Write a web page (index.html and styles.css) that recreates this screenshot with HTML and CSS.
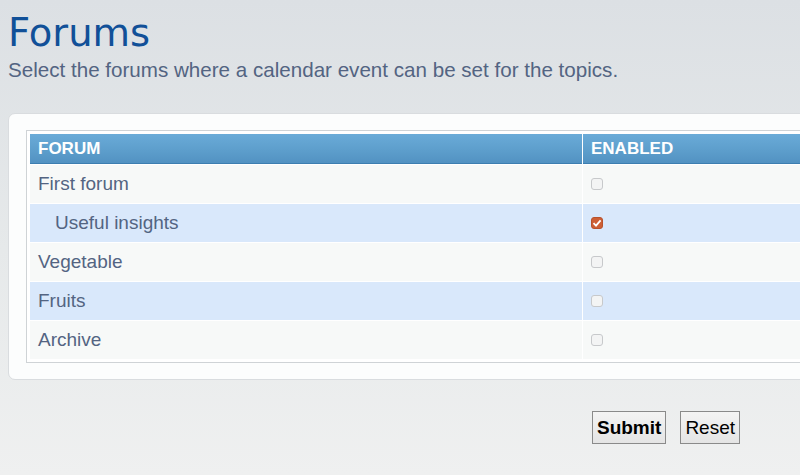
FILE: index.html
```html
<!DOCTYPE html>
<html lang="en">
<head>
<meta charset="utf-8">
<title>Forums</title>
<link rel="stylesheet" href="styles.css">
</head>
<body>
<div class="page">
  <h1 class="title">Forums</h1>
  <p class="intro">Select the forums where a calendar event can be set for the topics.</p>
  <form class="form">
    <div class="panel">
      <table class="grid">
        <thead>
          <tr>
            <th class="col-forum">Forum</th>
            <th>Enabled</th>
          </tr>
        </thead>
        <tbody>
          <tr class="row1">
            <td>First forum</td>
            <td><input type="checkbox" class="check"></td>
          </tr>
          <tr class="row2">
            <td><span class="indent">Useful insights</span></td>
            <td><input type="checkbox" class="check" checked></td>
          </tr>
          <tr class="row1">
            <td>Vegetable</td>
            <td><input type="checkbox" class="check"></td>
          </tr>
          <tr class="row2">
            <td>Fruits</td>
            <td><input type="checkbox" class="check"></td>
          </tr>
          <tr class="row1">
            <td>Archive</td>
            <td><input type="checkbox" class="check"></td>
          </tr>
        </tbody>
      </table>
    </div>
    <div class="actions">
      <button type="submit" class="btn btn-primary">Submit</button>
      <button type="reset" class="btn">Reset</button>
    </div>
  </form>
</div>
</body>
</html>
```
FILE: styles.css
```css
html {
  overflow: hidden;
  height: 100%;
}
body {
  margin: 0;
  min-height: 100%;
  background: linear-gradient(to bottom, #dce0e4 0px, #e6e9ea 250px, #eff0f0 475px);
  font-family: "Liberation Sans", Arial, sans-serif;
  color: #536482;
}
.page {
  width: 1316px;
  padding: 11px 8px 0 8px;
}
.title {
  margin: 0;
  font-family: "DejaVu Sans", Verdana, sans-serif;
  font-weight: normal;
  font-size: 38.5px;
  line-height: 44px;
  color: #115098;
}
.intro {
  margin: 3px 0 0 0;
  font-size: 20.6px;
  line-height: 23px;
}
.form {
  margin: 32px 0 0 0;
}
.panel {
  background: #fcfdfd;
  border: 1px solid #d9dcdf;
  border-radius: 7px;
  padding: 16px 17px 16px 17px;
}
.grid {
  width: 100%;
  border: 1px solid #cfd3d6;
  border-collapse: separate;
  border-spacing: 1px;
  padding: 2px;
  background: #fff;
}
.grid th {
  text-align: left;
  color: #fff;
  font-size: 17px;
  font-weight: bold;
  text-transform: uppercase;
  line-height: 20px;
  padding: 5px 8px 4px 8px;
  background: linear-gradient(to bottom, #6aabd8 0%, #5c9dcb 60%, #5292c2 100%);
  border-bottom: 1px solid #3c7eb0;
}
.grid .col-forum {
  width: 536px;
}
.grid td {
  font-size: 19px;
  line-height: 22px;
  padding: 8px 8px 8px 8px;
  vertical-align: middle;
}
.row1 td {
  background: #f7f9f8;
}
.row2 td {
  background: #d9e8fb;
}
.indent {
  padding-left: 17px;
}
.check {
  appearance: none;
  -webkit-appearance: none;
  display: block;
  width: 12px;
  height: 12px;
  margin: 0;
  border: 1px solid #c7c9cb;
  border-radius: 3px;
  background: #f3f4f4;
}
.check:checked {
  border-color: #b8522c;
  background: #cd5f35 url("data:image/svg+xml,%3Csvg xmlns='http://www.w3.org/2000/svg' viewBox='0 0 12 12'%3E%3Cpath d='M2.5 6.2 L5 8.6 L9.6 3.4' fill='none' stroke='%23fff' stroke-width='1.8'/%3E%3C/svg%3E") center / 12px 12px no-repeat;
}
.actions {
  display: flex;
  justify-content: center;
  gap: 14px;
  margin-top: 31px;
}
.btn {
  font-family: "Liberation Sans", Arial, sans-serif;
  font-size: 19px;
  line-height: 22px;
  color: #000;
  padding: 5px 4px 4px 4px;
  border: 1px solid #8a8a8a;
  border-radius: 0;
  background: linear-gradient(to bottom, #f4f4f4, #e4e4e4);
}
.btn-primary {
  font-weight: bold;
}
```
